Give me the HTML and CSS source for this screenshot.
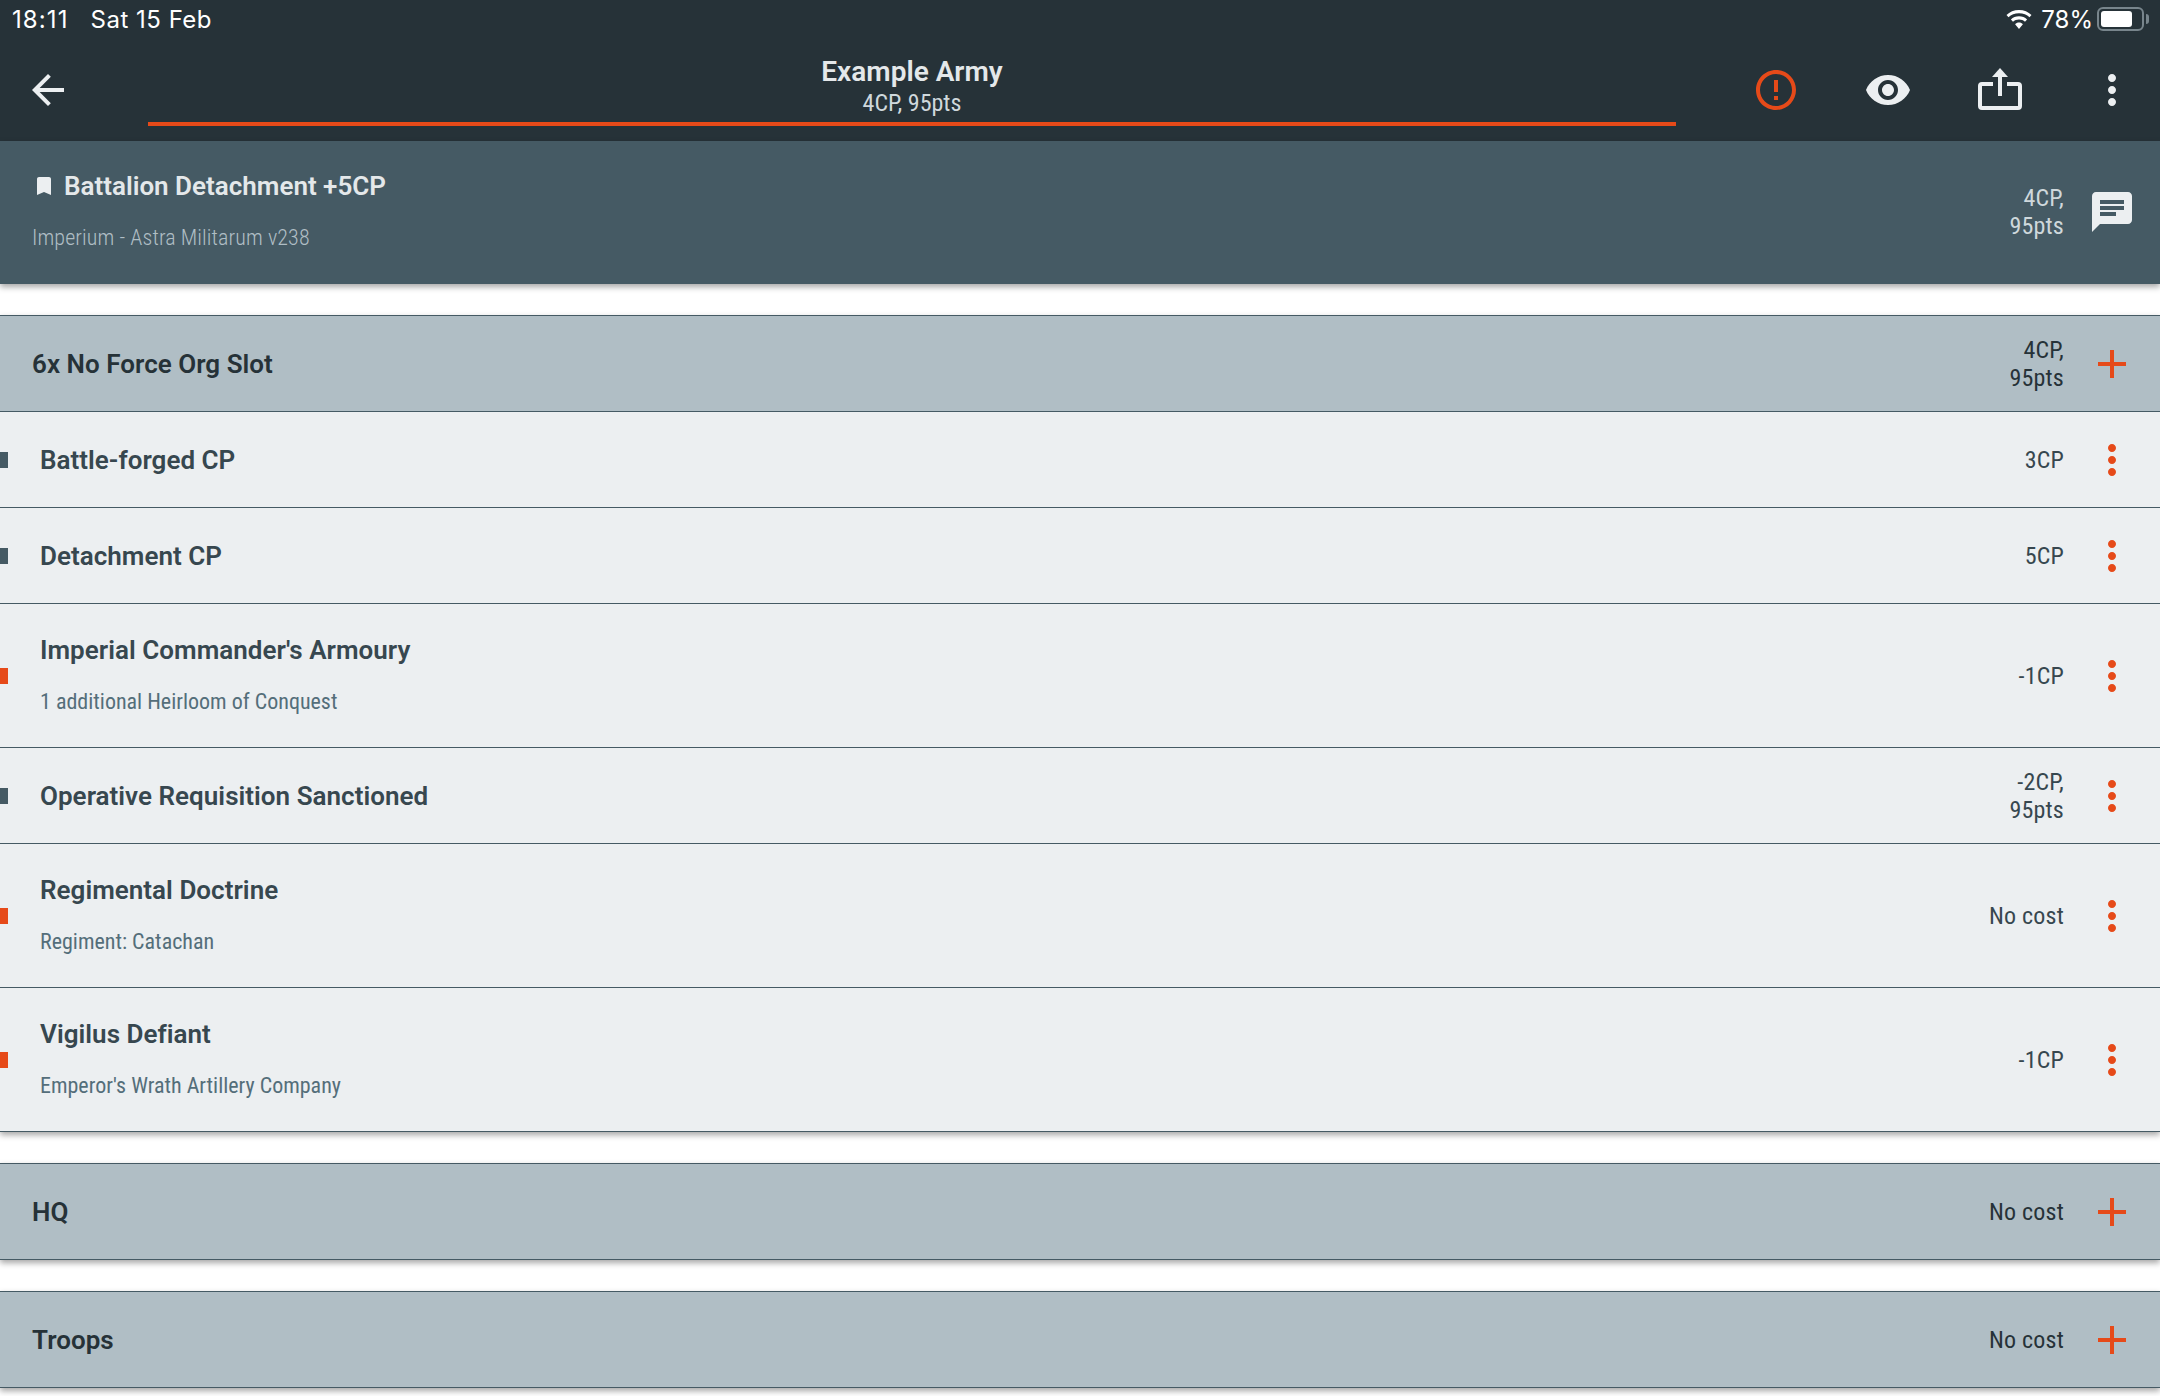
FILE: index.html
```html
<!DOCTYPE html>
<html lang="en">
<head>
<meta charset="utf-8">
<title>Example Army</title>
<link rel="stylesheet" href="styles.css">
</head>
<body>
<header class="appbar">
  <div class="status">
    <div class="status-left"><span class="clock">18:11</span><span class="date">Sat 15 Feb</span></div>
    <div class="status-right">
      <svg class="wifi" viewBox="0 0 26 19"><path d="M13 0C8 0 3.700 1.900.500 5l2 2.200C5.100 4.700 8.800 3.200 13 3.200s7.900 1.500 10.500 4l2-2.200C22.300 1.900 18 0 13 0zM13 6.300c-3.200 0-6 1.200-8.100 3.200l2.100 2.200c1.500-1.500 3.700-2.300 6-2.300s4.500.8 6 2.300l2.100-2.200C19 7.500 16.200 6.300 13 6.300zM13 12.600c-1.500 0-2.900.6-3.900 1.600L13 19l3.900-4.800c-1-1-2.400-1.600-3.900-1.600z"/></svg>
      <span class="pct">78%</span>
      <span class="battery"><span class="battery-fill"></span></span>
      <span class="battery-nub"></span>
    </div>
  </div>
  <div class="toolbar">
    <div class="nav">
      <svg class="icon" viewBox="0 0 24 24"><path d="M20 11H7.830l5.590-5.590L12 4l-8 8 8 8 1.410-1.410L7.830 13H20v-2z"/></svg>
    </div>
    <div class="title">
      <div class="title-main">Example Army</div>
      <div class="title-sub"><span class="cond">4CP, 95pts</span></div>
    </div>
    <div class="actions">
      <svg class="icon alert" viewBox="0 0 24 24"><path d="M11 15h2v2h-2zm0-8h2v6h-2zm.99-5C6.470 2 2 6.480 2 12s4.470 10 9.990 10C17.520 22 22 17.520 22 12S17.520 2 11.990 2zM12 20c-4.420 0-8-3.580-8-8s3.580-8 8-8 8 3.580 8 8-3.580 8-8 8z"/></svg>
      <svg class="icon" viewBox="0 0 24 24"><path d="M12 4.500C7 4.500 2.730 7.610 1 12c1.730 4.390 6 7.500 11 7.500s9.270-3.110 11-7.500c-1.730-4.390-6-7.500-11-7.500zM12 17c-2.760 0-5-2.240-5-5s2.240-5 5-5 5 2.240 5 5-2.240 5-5 5zm0-8c-1.660 0-3 1.340-3 3s1.340 3 3 3 3-1.340 3-3-1.340-3-3-3z"/></svg>
      <svg class="icon" viewBox="0 0 48 48"><path class="share" d="M17 18H6a2 2 0 0 0-2 2v20a2 2 0 0 0 2 2h36a2 2 0 0 0 2-2V20a2 2 0 0 0-2-2H31"/><path d="M22 9h4v21h-4z"/><path d="M24 2l8 9H16z"/></svg>
      <svg class="icon" viewBox="0 0 24 24"><path d="M12 8c1.100 0 2-.9 2-2s-.9-2-2-2-2 .9-2 2 .9 2 2 2zm0 2c-1.100 0-2 .9-2 2s.9 2 2 2 2-.9 2-2-.9-2-2-2zm0 6c-1.100 0-2 .9-2 2s.9 2 2 2 2-.9 2-2-.9-2-2-2z"/></svg>
    </div>
  </div>
</header>

<section class="detachment">
  <div class="det-text">
    <div class="det-title">
      <svg class="bookmark" viewBox="0 0 24 24"><path d="M17 3H7c-1.100 0-1.990.9-1.990 2L5 21l7-3 7 3V5c0-1.100-.9-2-2-2z"/></svg>
      <span>Battalion Detachment +5CP</span>
    </div>
    <div class="det-sub"><span class="cond">Imperium - Astra Militarum v238</span></div>
  </div>
  <div class="cost"><span class="cond">4CP,<br>95pts</span></div>
  <svg class="icon side light" viewBox="0 0 24 24"><path d="M20 2H4c-1.100 0-1.990.9-1.990 2L2 22l4-4h14c1.100 0 2-.9 2-2V4c0-1.100-.9-2-2-2zM6 9h12v2H6V9zm8 5H6v-2h8v2zm4-6H6V6h12v2z"/></svg>
</section>

<section class="group">
  <div class="row head">
    <div class="name">6x No Force Org Slot</div>
    <div class="cost"><span class="cond">4CP,<br>95pts</span></div>
    <svg class="icon side orange" viewBox="0 0 24 24"><path d="M19 13h-6v6h-2v-6H5v-2h6V5h2v6h6v2z"/></svg>
  </div>
  <div class="row item">
    <i class="mark"></i>
    <div class="name">Battle-forged CP</div>
    <div class="cost"><span class="cond">3CP</span></div>
    <svg class="icon side orange" viewBox="0 0 24 24"><path d="M12 8c1.100 0 2-.9 2-2s-.9-2-2-2-2 .9-2 2 .9 2 2 2zm0 2c-1.100 0-2 .9-2 2s.9 2 2 2 2-.9 2-2-.9-2-2-2zm0 6c-1.100 0-2 .9-2 2s.9 2 2 2 2-.9 2-2-.9-2-2-2z"/></svg>
  </div>
  <div class="row item">
    <i class="mark"></i>
    <div class="name">Detachment CP</div>
    <div class="cost"><span class="cond">5CP</span></div>
    <svg class="icon side orange" viewBox="0 0 24 24"><path d="M12 8c1.100 0 2-.9 2-2s-.9-2-2-2-2 .9-2 2 .9 2 2 2zm0 2c-1.100 0-2 .9-2 2s.9 2 2 2 2-.9 2-2-.9-2-2-2zm0 6c-1.100 0-2 .9-2 2s.9 2 2 2 2-.9 2-2-.9-2-2-2z"/></svg>
  </div>
  <div class="row item tall">
    <i class="mark warn"></i>
    <div class="name">Imperial Commander's Armoury<div class="sub"><span class="cond">1 additional Heirloom of Conquest</span></div></div>
    <div class="cost"><span class="cond">-1CP</span></div>
    <svg class="icon side orange" viewBox="0 0 24 24"><path d="M12 8c1.100 0 2-.9 2-2s-.9-2-2-2-2 .9-2 2 .9 2 2 2zm0 2c-1.100 0-2 .9-2 2s.9 2 2 2 2-.9 2-2-.9-2-2-2zm0 6c-1.100 0-2 .9-2 2s.9 2 2 2 2-.9 2-2-.9-2-2-2z"/></svg>
  </div>
  <div class="row item">
    <i class="mark"></i>
    <div class="name">Operative Requisition Sanctioned</div>
    <div class="cost"><span class="cond">-2CP,<br>95pts</span></div>
    <svg class="icon side orange" viewBox="0 0 24 24"><path d="M12 8c1.100 0 2-.9 2-2s-.9-2-2-2-2 .9-2 2 .9 2 2 2zm0 2c-1.100 0-2 .9-2 2s.9 2 2 2 2-.9 2-2-.9-2-2-2zm0 6c-1.100 0-2 .9-2 2s.9 2 2 2 2-.9 2-2-.9-2-2-2z"/></svg>
  </div>
  <div class="row item tall">
    <i class="mark warn"></i>
    <div class="name">Regimental Doctrine<div class="sub"><span class="cond">Regiment: Catachan</span></div></div>
    <div class="cost"><span class="cond">No cost</span></div>
    <svg class="icon side orange" viewBox="0 0 24 24"><path d="M12 8c1.100 0 2-.9 2-2s-.9-2-2-2-2 .9-2 2 .9 2 2 2zm0 2c-1.100 0-2 .9-2 2s.9 2 2 2 2-.9 2-2-.9-2-2-2zm0 6c-1.100 0-2 .9-2 2s.9 2 2 2 2-.9 2-2-.9-2-2-2z"/></svg>
  </div>
  <div class="row item tall">
    <i class="mark warn"></i>
    <div class="name">Vigilus Defiant<div class="sub"><span class="cond">Emperor's Wrath Artillery Company</span></div></div>
    <div class="cost"><span class="cond">-1CP</span></div>
    <svg class="icon side orange" viewBox="0 0 24 24"><path d="M12 8c1.100 0 2-.9 2-2s-.9-2-2-2-2 .9-2 2 .9 2 2 2zm0 2c-1.100 0-2 .9-2 2s.9 2 2 2 2-.9 2-2-.9-2-2-2zm0 6c-1.100 0-2 .9-2 2s.9 2 2 2 2-.9 2-2-.9-2-2-2z"/></svg>
  </div>
</section>

<section class="group">
  <div class="row head">
    <div class="name">HQ</div>
    <div class="cost"><span class="cond">No cost</span></div>
    <svg class="icon side orange" viewBox="0 0 24 24"><path d="M19 13h-6v6h-2v-6H5v-2h6V5h2v6h6v2z"/></svg>
  </div>
</section>

<section class="group">
  <div class="row head">
    <div class="name">Troops</div>
    <div class="cost"><span class="cond">No cost</span></div>
    <svg class="icon side orange" viewBox="0 0 24 24"><path d="M19 13h-6v6h-2v-6H5v-2h6V5h2v6h6v2z"/></svg>
  </div>
</section>
</body>
</html>
```
FILE: styles.css
```css
* { box-sizing: border-box; }
html, body { margin: 0; height: 1396px; overflow: hidden; background: #fff; }
body { font-family: Roboto, "Liberation Sans", sans-serif; color: #37474f; }

.cond { font-stretch: 75%; display: inline-block; }

.appbar { height: 141px; background: #263238; color: #eceff1; display: flex; flex-direction: column; }
.status { height: 38px; padding: 0 11px 0 12px; display: flex; justify-content: space-between; align-items: center; font-size: 24px; color: #fff; font-family: Inter, Roboto, sans-serif; }
.status-left { display: flex; gap: 22px; }
.clock { letter-spacing: 1.100px; }
.date { letter-spacing: .5px; }
.status-right { display: flex; align-items: center; }
.wifi { width: 26px; height: 19px; fill: #fff; margin-right: 9px; }
.pct { margin-right: 4px; }
.battery { width: 47px; height: 24px; border: 2px solid #78858c; border-radius: 6px; padding: 2px; display: block; }
.battery-fill { display: block; width: 31px; height: 16px; background: #fff; border-radius: 3px; }
.battery-nub { width: 3px; height: 10px; background: #78858c; margin-left: 2px; border-radius: 0 3px 3px 0; }

.toolbar { height: 103px; display: flex; align-items: flex-start; }
.nav { width: 148px; height: 103px; padding-left: 24px; display: flex; align-items: center; }
.icon { width: 48px; height: 48px; fill: #eceff1; flex: none; display: block; }
.title { width: 1528px; height: 88px; border-bottom: 4px solid #e64a19; text-align: center; padding-top: 17px; }
.title-main { font-size: 28px; font-weight: 600; line-height: 34px; color: #e4e8ea; }
.title-sub { font-size: 24px; line-height: 28px; color: #cfd8dc; }
.actions { flex: 1; height: 103px; display: flex; align-items: center; justify-content: space-between; padding: 0 24px 0 76px; }
.alert { fill: #e64a19; }
.share { fill: none; stroke: #eceff1; stroke-width: 4; }

.detachment { height: 143px; background: #455a64; color: #eceff1; display: flex; align-items: center; padding-left: 32px; box-shadow: 0 3px 6px rgba(0,0,0,.35); position: relative; }
.det-text { flex: 1; padding-bottom: 4px; }
.det-title { display: flex; align-items: center; font-size: 26px; font-weight: 600; line-height: 34px; color: #e4e8ea; }
.bookmark { width: 24px; height: 24px; fill: #eceff1; margin-right: 8px; }
.det-sub { margin-top: 21px; font-size: 22px; line-height: 28px; font-weight: 300; color: #b0bec5; letter-spacing: .1px; }
.cost { font-size: 24px; line-height: 28px; padding-top: 1px; text-align: right; color: inherit; letter-spacing: .2px; }
.detachment .cost { color: #cfd8dc; padding: 0 0 1px; }
.side { margin: 0 24px 0 24px; }
.light { fill: #eceff1; margin-bottom: 2px; }
.orange { fill: #e64a19; }

.group { margin-top: 31px; border-top: 1px solid #455a64; box-shadow: 0 3px 6px rgba(0,0,0,.35); position: relative; }
.row { display: flex; align-items: center; height: 96px; border-bottom: 1px solid #455a64; position: relative; }
.head { background: #b0bec5; padding-left: 32px; color: #263238; }
.item { background: #eceff1; padding-left: 40px; }
.tall { height: 144px; }
.name { flex: 1; font-size: 26px; font-weight: 600; line-height: 32px; letter-spacing: .03px; }
.sub { margin-top: 22px; margin-bottom: 2px; font-size: 22px; line-height: 28px; font-weight: 400; color: #546e7a; letter-spacing: 0; }
.mark { position: absolute; left: 0; top: 50%; margin-top: -8px; width: 8px; height: 16px; background: #455a64; }
.warn { background: #e64a19; }
```
